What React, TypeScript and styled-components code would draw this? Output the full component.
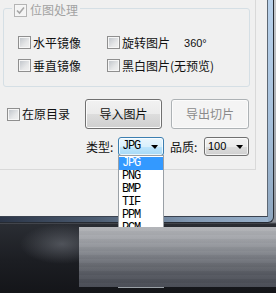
import React from "react";
import styled, { createGlobalStyle } from "styled-components";

const UI = `"Noto Sans CJK SC", "Microsoft YaHei", sans-serif`;
const LIST = `"Liberation Mono", "DejaVu Sans Mono", monospace`;

const Global = createGlobalStyle`
  html, body { margin: 0; padding: 0; background: #16181d; }
  body { overflow: hidden; }
  * { box-sizing: border-box; }
`;

const Desktop = styled.div`
  position: relative;
  width: 276px;
  height: 293px;
  overflow: hidden;
  font-family: ${UI};
  background:
    radial-gradient(ellipse 42px 20px at 62px 244px, rgba(110, 114, 122, 0.6), rgba(110, 114, 122, 0) 100%),
    linear-gradient(to bottom, #c9cbce 0px, #9ea2a8 180px, #8a8e95 222px, #2a2d33 224px, #1c1e23 260px, #141519 293px);
`;

const Frame = styled.div`
  width: 274px;
  height: 223px;
  padding: 0 5px 5px 0;
  border-right: 1px solid #262b33;
  border-bottom: 1px solid #262b33;
  border-bottom-right-radius: 6px;
  background:
    linear-gradient(to bottom, #b9d2ec 0%, #a6c0db 55%, #8ea6bf 100%) right top / 5px 100% no-repeat,
    linear-gradient(to right, #2b3547 0%, #4c5c71 35%, #8299b3 70%, #9ab3cd 100%);
`;

const Client = styled.div`
  width: 268px;
  height: 217px;
  background: #f0f0f0;
  border-right: 1px solid #5d6874;
  border-bottom: 1px solid #3b4350;
`;

const TabPage = styled.div`
  width: 256px;
  height: 170px;
  border-right: 1px solid #d9d9d9;
  border-bottom: 1px solid #d9d9d9;
  display: flex;
  flex-direction: column;
  padding: 8px 0 0 3px;
`;

const GroupBox = styled.div`
  position: relative;
  width: 247px;
  height: 79px;
  border: 1px solid #d5dfe5;
  border-radius: 3px;
  display: grid;
  grid-template-columns: 89px 1fr;
  grid-auto-rows: 23px;
  align-items: center;
  align-content: start;
  padding: 22px 0 0 14px;
`;

const GroupTitle = styled.div`
  position: absolute;
  top: -6px;
  left: 8px;
  height: 14px;
  display: flex;
  align-items: center;
  gap: 3px;
  padding: 0 2px;
  background: #f0f0f0;
`;

const Box = styled.span<{ $disabled?: boolean }>`
  flex: none;
  width: 13px;
  height: 13px;
  border: 1px solid ${(p) => (p.$disabled ? "#b4b4b4" : "#8f8f8f")};
  background: ${(p) =>
    p.$disabled ? "#f4f4f4" : "linear-gradient(135deg, #bcc1c7 0%, #e6e7e8 60%, #f2f2f2 100%)"};
  box-shadow: inset 0 0 0 1px #f6f6f6;
  display: flex;
  align-items: center;
  justify-content: center;
`;

const Label = styled.span<{ $disabled?: boolean }>`
  font-size: 12px;
  line-height: 14px;
  color: ${(p) => (p.$disabled ? "#a2a2a2" : "#111")};
  white-space: nowrap;
`;

const CheckItem = styled.label<{ $width?: number }>`
  display: flex;
  align-items: center;
  gap: 2px;
  ${(p) => (p.$width ? `width: ${p.$width}px; flex: none;` : "")}
`;

const Degree = styled.span`
  font-family: "Liberation Sans", Arial, sans-serif;
  font-size: 11px;
  color: #111;
  margin-left: 12px;
`;

const ActionRow = styled.div`
  display: flex;
  align-items: center;
  height: 30px;
  margin-top: 12px;
  padding-left: 4px;
`;

const ButtonGroup = styled.div`
  display: flex;
  gap: 9px;
`;

const Button = styled.button<{ $width: number }>`
  width: ${(p) => p.$width}px;
  height: 30px;
  padding: 0;
  font-family: ${UI};
  font-size: 12px;
  line-height: 14px;
  color: #111;
  border: 1px solid #707070;
  border-radius: 3px;
  background: linear-gradient(to bottom, #f2f2f2 0%, #ebebeb 50%, #dddddd 50%, #cfcfcf 100%);
  box-shadow: inset 0 0 0 1px #fbfbfb;
  &:disabled {
    color: #8a8a8a;
    border-color: #adb2b5;
    background: #f4f4f4;
    box-shadow: inset 0 0 0 1px #fbfbfb;
  }
`;

const FieldRow = styled.div`
  display: flex;
  align-items: center;
  height: 19px;
  margin-top: 8px;
  padding-left: 83px;
`;

const Field = styled.div`
  display: flex;
  align-items: center;
`;

const FieldLabel = styled.span<{ $width: number; $lead?: number }>`
  width: ${(p) => p.$width}px;
  margin-left: ${(p) => p.$lead ?? 0}px;
  font-size: 12px;
  line-height: 14px;
  color: #111;
  white-space: nowrap;
`;

const Combo = styled.div<{ $width: number; $focused?: boolean }>`
  position: relative;
  width: ${(p) => p.$width}px;
  height: 19px;
  display: flex;
  align-items: center;
  padding: 0 5px 0 3px;
  border-radius: 3px;
  border: 1px solid ${(p) => (p.$focused ? "#3c7fb1" : "#707070")};
  background: ${(p) =>
    p.$focused
      ? "linear-gradient(to bottom, #eaf6fd 0%, #d9f0fc 50%, #bee6fd 50%, #a7d9f5 100%)"
      : "linear-gradient(to bottom, #f2f2f2 0%, #ebebeb 50%, #dddddd 50%, #cfcfcf 100%)"};
  box-shadow: inset 0 0 0 1px rgba(255, 255, 255, 0.7);
`;

const ComboText = styled.span<{ $mono?: boolean }>`
  font-family: ${(p) => (p.$mono ? LIST : `"Liberation Sans", Arial, sans-serif`)};
  font-size: ${(p) => (p.$mono ? "12px" : "11px")};
  letter-spacing: ${(p) => (p.$mono ? "-1.2px" : "0")};
  color: #000;
  line-height: 13px;
`;

const Arrow = styled.span`
  margin-left: auto;
  width: 0;
  height: 0;
  border-left: 4px solid transparent;
  border-right: 3px solid transparent;
  border-top: 4px solid #000;
`;

const DropList = styled.ul`
  position: absolute;
  top: 17px;
  left: -1px;
  width: 46px;
  height: 133px;
  margin: 0;
  padding: 1px 0 0;
  list-style: none;
  background: #fff;
  border: 1px solid #9aa0a6;
  z-index: 5;
`;

const DropItem = styled.li<{ $selected?: boolean }>`
  height: 13px;
  line-height: 13px;
  padding-left: 3px;
  font-family: ${LIST};
  font-size: 12px;
  letter-spacing: -1.2px;
  color: ${(p) => (p.$selected ? "#fff" : "#000")};
  background: ${(p) => (p.$selected ? "#3399ff" : "transparent")};
`;

const Overlay = styled.div`
  position: absolute;
  left: 79px;
  top: 227px;
  width: 197px;
  height: 60px;
  z-index: 10;
  background:
    repeating-linear-gradient(to bottom, rgba(255,255,255,0.025) 0px, rgba(255,255,255,0.025) 4px, rgba(0,0,0,0.025) 4px, rgba(0,0,0,0.025) 8px),
    linear-gradient(to bottom, #b2b4b8 0%, #a4a6ab 18%, #8f9298 35%, #7a7d84 50%, #666970 65%, #555860 80%, #474a53 100%);
`;

const Check = ({ disabled }: { disabled?: boolean }) => (
  <svg width="9" height="9" viewBox="0 0 9 9">
    <path d="M1 4.5 L3.5 7 L8 1.5" fill="none" stroke={disabled ? "#a6a6a6" : "#333"} strokeWidth="1.6" />
  </svg>
);

const CheckBox = ({ checked, disabled }: { checked?: boolean; disabled?: boolean }) => (
  <Box $disabled={disabled}>{checked && <Check disabled={disabled} />}</Box>
);

const types = ["JPG", "PNG", "BMP", "TIF", "PPM", "PCM", "TGA", "GIF", "ICO"];

export default function App() {
  return (
    <Desktop>
      <Global />
      <Frame>
        <Client>
          <TabPage>
            <GroupBox>
              <GroupTitle>
                <CheckBox checked disabled />
                <Label $disabled>位图处理</Label>
              </GroupTitle>
              <CheckItem>
                <CheckBox />
                <Label>水平镜像</Label>
              </CheckItem>
              <CheckItem>
                <CheckBox />
                <Label>旋转图片</Label>
                <Degree>360°</Degree>
              </CheckItem>
              <CheckItem>
                <CheckBox />
                <Label>垂直镜像</Label>
              </CheckItem>
              <CheckItem>
                <CheckBox />
                <Label>黑白图片(无预览)</Label>
              </CheckItem>
            </GroupBox>
            <ActionRow>
              <CheckItem $width={78}>
                <CheckBox />
                <Label>在原目录</Label>
              </CheckItem>
              <ButtonGroup>
                <Button $width={77}>导入图片</Button>
                <Button $width={78} disabled>
                  导出切片
                </Button>
              </ButtonGroup>
            </ActionRow>
            <FieldRow>
              <Field>
                <FieldLabel $width={32}>类型:</FieldLabel>
                <Combo $width={46} $focused>
                  <ComboText $mono>JPG</ComboText>
                  <Arrow />
                  <DropList>
                    {types.map((t, i) => (
                      <DropItem key={t} $selected={i === 0}>
                        {t}
                      </DropItem>
                    ))}
                  </DropList>
                </Combo>
              </Field>
              <Field>
                <FieldLabel $width={34} $lead={6}>
                  品质:
                </FieldLabel>
                <Combo $width={45}>
                  <ComboText>100</ComboText>
                  <Arrow />
                </Combo>
              </Field>
            </FieldRow>
          </TabPage>
        </Client>
      </Frame>
      <Overlay />
    </Desktop>
  );
}
